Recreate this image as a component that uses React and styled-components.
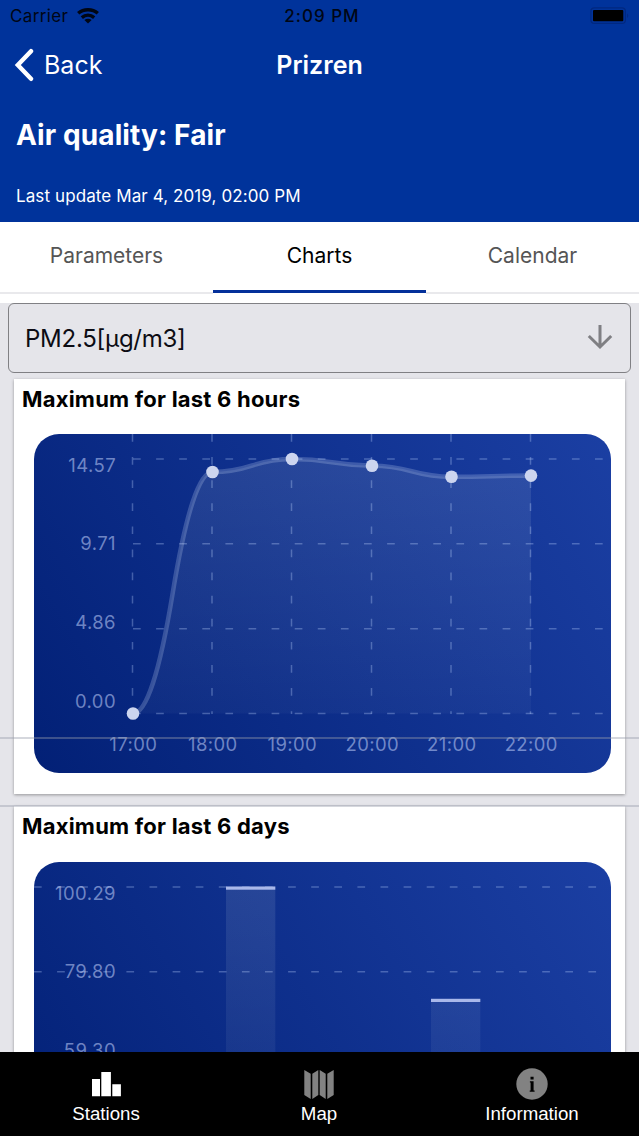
import React from 'react';
import styled, { createGlobalStyle, css } from 'styled-components';

const GlobalStyle = createGlobalStyle`
  *{
    box-sizing:border-box;
  }
  body{
    margin:0;
    overflow:hidden;
    font-family: Inter, 'Liberation Sans', sans-serif;
    background-color:#e5e5ea;
  }
`;

const Screen = styled.div`
  display:flex;
  flex-direction:column;
  width:639px;
  height:1136px;
  overflow:hidden;
`;

const Header = styled.header`
  display:flex;
  flex-direction:column;
  flex:none;
  height:222px;
  background-color:#00339b;
  color:#fff;
`;

const StatusBar = styled.div`
  display:grid;
  grid-template-columns:1fr auto 1fr;
  align-items:center;
  height:32px;
  padding:0 9px 0 10px;
  color:#000614;
  font-size:17px;
  line-height:32px;
`;
const Carrier = styled.div`
  display:flex;
  align-items:center;
  gap:9px;
  letter-spacing:.35px;
`;
const Clock = styled.div`
  position:relative;
  left:2px;
  font-weight:500;
  letter-spacing:1px;
`;
const Battery = styled.div`
  display:flex;
  justify-content:flex-end;
`;

const NavBar = styled.div`
  display:grid;
  grid-template-columns:1fr auto 1fr;
  align-items:center;
  height:65px;
  padding:0 14px;
  font-size:25px;
`;
const Back = styled.div`
  display:flex;
  align-items:center;
  gap:10px;
`;
const NavTitle = styled.div`
  font-weight:600;
`;

const Quality = styled.h1`
  margin:21px 0 0 16px;
  font-size:28px;
  line-height:34px;
  font-weight:700;
  letter-spacing:.1px;
`;
const Updated = styled.div`
  margin:33px 0 0 16px;
  font-size:17px;
  line-height:22px;
  letter-spacing:.1px;
`;

const Tabs = styled.div`
  display:flex;
  flex:none;
  height:81px;
  padding-bottom:9px;
  background-color:#fff;
`;
const Tab = styled.div`
  flex:1;
  padding-top:20px;
  text-align:center;
  font-size:21px;
  line-height:28px;
  color:#555;
  border-bottom:2px solid #e9e9ec;

  ${p => p.$active && css`
    color:#000;
    border-bottom:3px solid #04309a;
    margin-bottom:1px;
  `}
`;

const Content = styled.main`
  position:relative;
  flex:1;
  min-height:0;
  overflow:hidden;
`;
const Select = styled.div`
  display:flex;
  align-items:center;
  justify-content:space-between;
  height:70px;
  margin:0 8px 6px;
  padding:0 17px 0 16px;
  border:1.5px solid #808084;
  border-radius:6px;
  color:#0c0c14;
  font-size:24px;
  letter-spacing:-.25px;

  svg{
    margin-bottom:2px;
  }
`;
const Card = styled.section`
  height:415px;
  margin:0 14px 12px;
  padding:0 14px 0 20px;
  background-color:#fff;
  box-shadow:0 1px 3px rgba(0, 0, 0, .35);
`;
const CardTitle = styled.h2`
  margin:0 0 0 -12px;
  height:${p => p.$height || 55}px;
  font-size:22px;
  line-height:41px;
  font-weight:700;
  letter-spacing:.22px;
  color:#000;
`;
const Chart = styled.svg`
  display:block;
  border-radius:25px;

  text{
    font-size:18.5px;
    letter-spacing:.4px;
    fill:rgba(200, 215, 255, .54);
  }
`;
/* list separators, they run over the cards */
const Separator = styled.div`
  position:absolute;
  left:0;
  right:0;
  top:${p => p.$top}px;
  height:2px;
  background-color:rgba(150, 155, 170, .4);
`;

const BottomBar = styled.nav`
  display:flex;
  flex:none;
  height:84px;
  background-color:#000;
`;
const BottomItem = styled.div`
  display:flex;
  flex:1;
  flex-direction:column;
  align-items:center;
  padding:15px 1px 0 0;
  font-family:'Liberation Sans', Arial, sans-serif;
  font-size:18.7px;
  color:#fff;

  svg{
    height:34px;
  }
`;
const BottomLabel = styled.span`
  margin-top:1px;
  line-height:24px;
`;

const POINTS = [
  { x: 99, y: 279.5, label: '17:00' },
  { x: 178.5, y: 38, label: '18:00' },
  { x: 258, y: 25, label: '19:00' },
  { x: 338, y: 31.7, label: '20:00' },
  { x: 417.5, y: 42.8, label: '21:00' },
  { x: 497, y: 41.6, label: '22:00' },
];
const ROWS = [25, 109.7, 194.7, 279.5];
const BARS = [
  { x: 192, y: 24.5 },
  { x: 397, y: 136.8 },
];

const linePath = points => points.slice(1).reduce((d, p, i) => {
  const prev = points[i];
  const midX = (prev.x + p.x) / 2;
  const midY = (prev.y + p.y) / 2;
  return `${d} Q ${(prev.x + midX) / 2} ${prev.y} ${midX} ${midY} Q ${(midX + p.x) / 2} ${p.y} ${p.x} ${p.y}`;
}, `M ${points[0].x} ${points[0].y}`);

const ChartBase = ({ id, children }) => (
  <Chart width="577" height="339" viewBox="0 0 577 339">
    <defs>
      <linearGradient id={`${id}-bg`} gradientUnits="userSpaceOnUse" x1="0" y1="339" x2="577" y2="0">
        <stop offset="0" stopColor="#022076" />
        <stop offset="1" stopColor="#1b3fa3" />
      </linearGradient>
      <linearGradient id={`${id}-fill`} gradientUnits="userSpaceOnUse" x1="0" y1="0" x2="0" y2="339">
        <stop offset="0" stopColor="#f4fff4" stopOpacity=".11" />
        <stop offset="1" stopColor="#f4fff4" stopOpacity=".015" />
      </linearGradient>
    </defs>
    <rect width="577" height="339" fill={`url(#${id}-bg)`} />
    {children}
  </Chart>
);

const Grid = ({ from }) => (
  <g stroke="rgba(190, 210, 255, .32)" strokeWidth="1.5" strokeDasharray="7.7 15.4">
    {ROWS.map(y => <line key={y} x1={from} x2="577" y1={y} y2={y} />)}
  </g>
);

const YLabels = ({ labels }) => labels.map((label, i) => (
  <text key={label} x="82" y={37.5 + i * 78.7} textAnchor="end">{label}</text>
));

const HoursChart = () => (
  <ChartBase id="hours">
    <Grid from={99} />
    <g stroke="rgba(190, 210, 255, .32)" strokeWidth="1.5" strokeDasharray="7.7 15.4">
      {POINTS.map(p => <line key={p.x} x1={p.x - .5} x2={p.x - .5} y1="0" y2="280" />)}
    </g>
    <YLabels labels={['14.57', '9.71', '4.86', '0.00']} />
    {POINTS.map(p => (
      <text key={p.label} x={p.x + .3} y="316.5" textAnchor="middle">{p.label}</text>
    ))}
    <path d={`${linePath(POINTS)} V 279.5 H 99 Z`} fill="url(#hours-fill)" />
    <path d={linePath(POINTS)} fill="none" stroke="rgba(220, 230, 255, .22)" strokeWidth="4.6" />
    {POINTS.map(p => <circle key={p.x} cx={p.x} cy={p.y} r="6.3" fill="#ccd5ef" />)}
  </ChartBase>
);

const DaysChart = () => (
  <ChartBase id="days">
    <Grid from={0} />
    <YLabels labels={['100.29', '79.80', '59.30']} />
    {BARS.map(b => (
      <g key={b.x}>
        <rect x={b.x} y={b.y} width="49.3" height={279.5 - b.y} fill="url(#days-fill)" />
        <rect x={b.x} y={b.y} width="49.3" height="3.2" fill="#a9b8ea" />
      </g>
    ))}
  </ChartBase>
);

const WifiIcon = () => (
  <svg width="22" height="16" viewBox="0 0 22 16" fill="none" stroke="currentColor" strokeWidth="3.4">
    <path d="M1.2 5.3 C6.5 .6 15.5 .6 20.8 5.3" />
    <path d="M4.8 9.6 C8.5 6.4 13.5 6.4 17.2 9.6" />
    <path d="M11 15.4 L7.4 12 C9.5 10.4 12.5 10.4 14.6 12 Z" fill="currentColor" stroke="none" />
  </svg>
);

const BatteryIcon = () => (
  <svg width="40" height="18" viewBox="0 0 40 18">
    <rect x=".9" y=".9" width="34.5" height="15.5" rx="3.5" fill="none" stroke="#002880" strokeWidth="1.2" />
    <rect x="3" y="3" width="30.3" height="11.2" rx="1" fill="#000" />
    <path d="M37.2 6.3 Q39.4 8.6 37.2 11 Z" fill="#002880" />
  </svg>
);

const BackIcon = () => (
  <svg width="20" height="34" viewBox="0 0 20 34" fill="none" stroke="#fff" strokeWidth="4.4" strokeLinecap="round">
    <path d="M17 3.2 L3.8 17 L17 30.8" />
  </svg>
);

const ArrowIcon = () => (
  <svg width="26" height="26" viewBox="0 0 26 26" fill="none" stroke="#7f7f83" strokeWidth="3">
    <path d="M13 1 V23 M1.8 12 L13 23 L24.2 12" />
  </svg>
);

const StationsIcon = () => (
  <svg width="32" height="34" viewBox="0 0 32 34" fill="#fff">
    <path d="M2 12 h8 v17.3 h-8 Z M11.3 5 h9.6 v24.3 h-9.6 Z M22.3 17.2 h8.6 v12.1 h-8.6 Z" />
  </svg>
);

const MapIcon = () => (
  <svg width="32" height="34" viewBox="0 0 32 34" fill="#828282">
    <path d="M1.3 3 L7.7 6.8 V32 L1.3 28 Z M9.3 6.8 L15.3 3 V28 L9.3 32 Z" />
    <path d="M16.7 3 L22.7 6.8 V32 L16.7 28 Z M24.3 6.8 L30.7 3 V28 L24.3 32 Z" />
  </svg>
);

const InfoIcon = () => (
  <svg width="32" height="34" viewBox="0 0 32 34">
    <circle cx="16" cy="17" r="15.7" fill="#828282" />
    <path d="M14.5 9.8 h3.1 v2.7 h-3.1 Z M13.9 14.2 h3.7 v9.3 h1 v1.2 h-4.9 v-1.2 h.9 v-8.1 h-.7 Z" fill="#000" />
  </svg>
);

const TABS = ['Parameters', 'Charts', 'Calendar'];

const App = () => (
  <Screen>
    <GlobalStyle />
    <Header>
      <StatusBar>
        <Carrier>Carrier <WifiIcon /></Carrier>
        <Clock>2:09 PM</Clock>
        <Battery><BatteryIcon /></Battery>
      </StatusBar>
      <NavBar>
        <Back><BackIcon /> Back</Back>
        <NavTitle>Prizren</NavTitle>
      </NavBar>
      <Quality>Air quality: Fair</Quality>
      <Updated>Last update Mar 4, 2019, 02:00 PM</Updated>
    </Header>
    <Tabs>
      {TABS.map(tab => <Tab key={tab} $active={tab === 'Charts'}>{tab}</Tab>)}
    </Tabs>
    <Content>
      <Select>PM2.5[µg/m3] <ArrowIcon /></Select>
      <Card>
        <CardTitle>Maximum for last 6 hours</CardTitle>
        <HoursChart />
      </Card>
      <Card>
        <CardTitle $height={56}>Maximum for last 6 days</CardTitle>
        <DaysChart />
      </Card>
      <Separator $top={434} />
      <Separator $top={502} />
    </Content>
    <BottomBar>
      <BottomItem>
        <StationsIcon />
        <BottomLabel>Stations</BottomLabel>
      </BottomItem>
      <BottomItem>
        <MapIcon />
        <BottomLabel>Map</BottomLabel>
      </BottomItem>
      <BottomItem>
        <InfoIcon />
        <BottomLabel>Information</BottomLabel>
      </BottomItem>
    </BottomBar>
  </Screen>
);

export default App;
